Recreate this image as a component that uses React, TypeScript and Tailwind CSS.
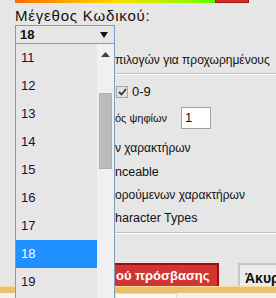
import React from 'react';

const sizes = [11, 12, 13, 14, 15, 16, 17, 18, 19, 20];

function SizeList({ selected }: { selected: number }) {
  return (
    <div className="absolute left-[15px] top-[44px] w-[100px] h-[270px] flex border-x border-[#7f9db9] bg-[#e6e6e6]">
      <div className="flex-1 flex flex-col">
        {sizes.map((n) => (
          <div
            key={n}
            className={
              n === selected
                ? 'h-[28px] shrink-0 flex items-center pl-[5px] bg-[#1e90ff] text-white'
                : 'h-[28px] shrink-0 flex items-center pl-[5px] text-[#14103a]'
            }
          >
            {n}
          </div>
        ))}
      </div>
      {/* scrollbar */}
      <div className="w-[17px] bg-[#f0f0f0] flex flex-col items-center">
        <svg width="9" height="5" viewBox="0 0 9 5" className="mt-[8px]">
          <path d="M0 5 L4.5 0 L9 5 Z" fill="#404040" />
        </svg>
        <div className="mt-[36px] w-[13px] h-[76px] bg-[#bcbcbc] border border-[#b0b0b0]" />
      </div>
    </div>
  );
}

export default function App() {
  return (
    <div
      className="relative w-[276px] h-[298px] overflow-hidden bg-[#e6e6e6] text-[13px] text-[#111]"
      style={{ fontFamily: '"Liberation Sans", Arial, sans-serif' }}
    >
      {/* strength bar */}
      <div className="flex pl-[15px] h-[3px]">
        <div className="w-[200px] bg-gradient-to-r from-[#ff6a00] via-[#ffd800] to-[#4cff00]" />
        <div className="w-[34px] bg-[#d0312d] border-b border-x border-[#a01010]" />
      </div>

      <div className="pl-[15px] mt-[5px] leading-[16px] text-[15px] tracking-[0.8px]">Μέγεθος Κωδικού:</div>

      {/* combo */}
      <div className="ml-[15px] mt-[1px] w-[100px] h-[19px] border border-[#7a9cd3] flex items-center justify-between pl-[4px] pr-[6px] font-bold">
        <span>18</span>
        <svg width="8" height="6" viewBox="0 0 8 6">
          <path d="M0 0 L8 0 L4 6 Z" fill="#111" />
        </svg>
      </div>

      {/* options panel */}
      <div className="ml-[115px] flex flex-col">
        <div className="mt-[8px] leading-[16px] text-[12px] whitespace-nowrap">πιλογών για προχωρημένους</div>
        <div className="mt-[5px] border-t border-[#c2c2c2] border-b-white border-b" />

        <div className="mt-[10px] flex items-center h-[14px]">
          <div className="w-[12px] h-[12px] ml-[1px] border border-[#a8a8a8] bg-[#e2e2e2] flex items-center justify-center">
            <svg width="9" height="8" viewBox="0 0 9 8">
              <path d="M1 4 L3.5 6.5 L8 1" stroke="#333" strokeWidth="1.8" fill="none" />
            </svg>
          </div>
          <span className="ml-[4px]">0-9</span>
        </div>

        <div className="mt-[8px] flex items-center h-[22px]">
          <span className="w-[66px] text-[11px] whitespace-nowrap">ός ψηφίων</span>
          <div className="w-[30px] h-[22px] bg-white border border-[#a0a0a0] pl-[3px] leading-[20px]">1</div>
        </div>

        <div className="mt-[11px] leading-[16px] text-[12px] whitespace-nowrap">ν χαρακτήρων</div>
        <div className="mt-[8px] leading-[16px] text-[12.5px] whitespace-nowrap">nceable</div>
        <div className="mt-[7px] leading-[16px] text-[12px] whitespace-nowrap">ορούμενων χαρακτήρων</div>
        <div className="mt-[7px] leading-[16px] text-[12.5px] whitespace-nowrap">haracter Types</div>
        <div className="mt-[6px] border-t border-[#c2c2c2] border-b-white border-b" />

        <div className="mt-[29px] flex gap-[19px] h-[23px]">
          <div className="w-[104px] shrink-0 bg-[#d13431] border-t-2 border-r-2 border-[#9e0f0f] text-white font-bold text-[13px] flex items-center pl-[1px] whitespace-nowrap">
            ού πρόσβασης
          </div>
          <div className="w-[60px] shrink-0 bg-[#ececec] border-2 border-[#c6c6c6] border-b-0 font-bold text-[14px] pl-[5px] pt-[3px] whitespace-nowrap">
            Άκυρο
          </div>
        </div>
      </div>

      {/* footer strip */}
      <div className="h-[7px] bg-[#ecc069] border-t border-[#f6dca0]" />
      <div className="h-[6px] bg-[#f2f2f2] pl-[115px]">
        <div className="w-[62px] h-full border border-[#dcdcdc] bg-[#f8f8f8]" />
      </div>

      <SizeList selected={18} />
    </div>
  );
}
